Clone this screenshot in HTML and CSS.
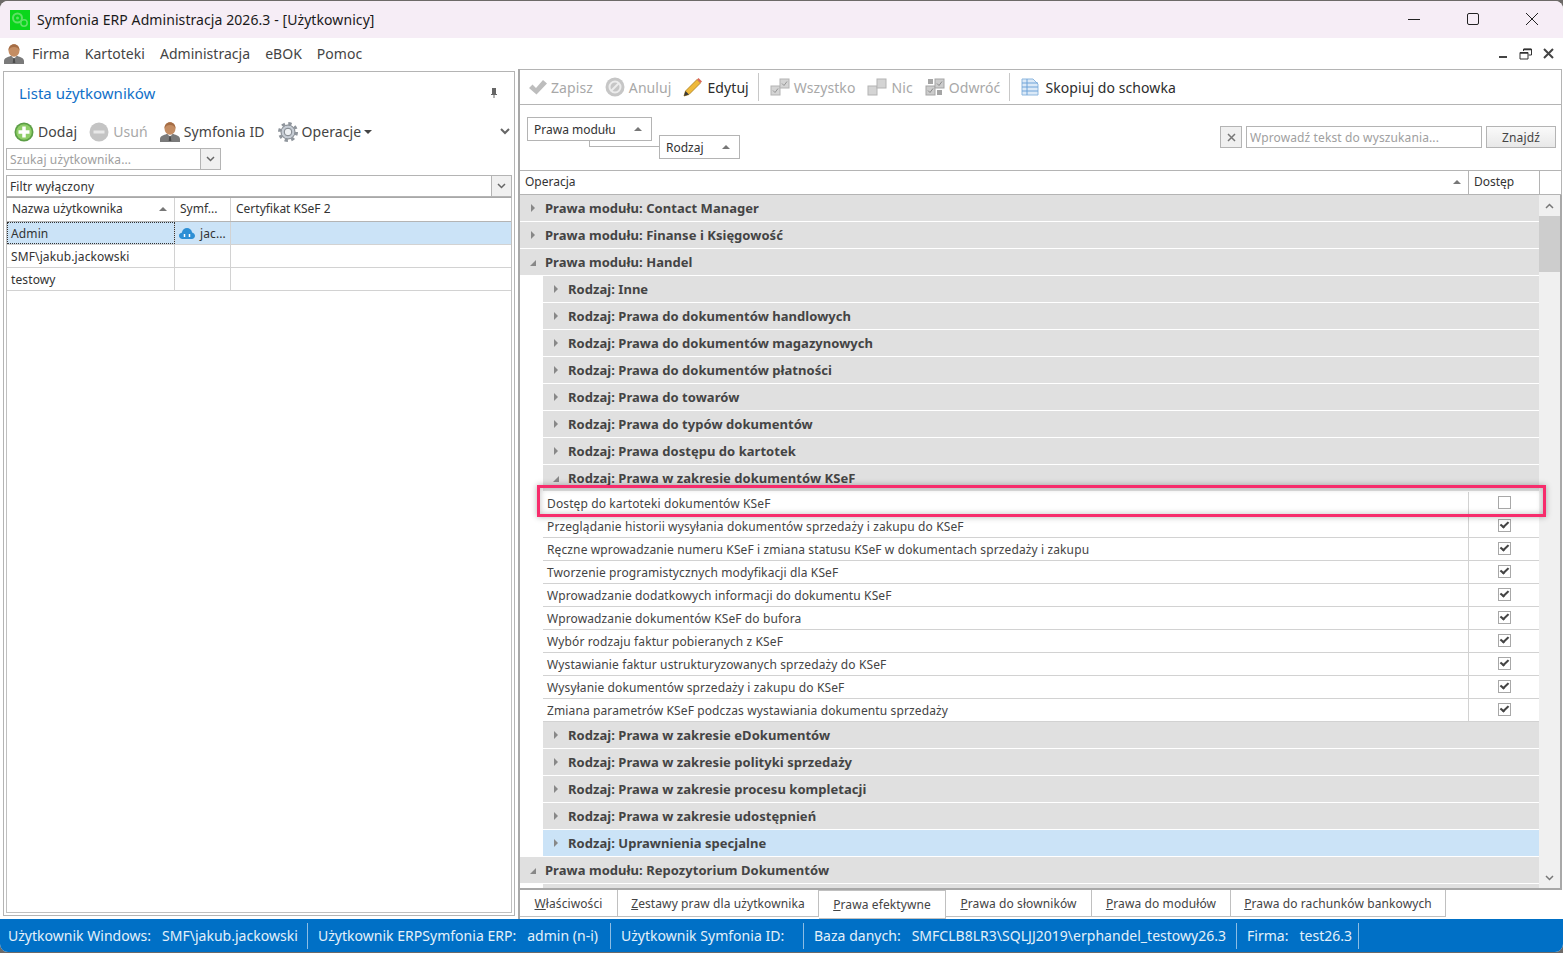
FILE: index.html
```html
<!DOCTYPE html>
<html lang="pl">
<head>
  <meta charset="UTF-8" />
  <title>Symfonia ERP Administracja 2026.3 - [Użytkownicy]</title>
  <link rel="stylesheet" href="styles.css">
</head>
<body>
  <svg class="icon-defs" width="0" height="0">
    <defs>
      <symbol id="i-user" viewBox="0 0 20 20">
        <path d="M0 20v-3c0-3 4-4 6.500-5h7c2.500 1 6.500 2 6.500 5v3z" fill="#7a7a7a"/>
        <path d="M7.500 12l2.500 3 2.500-3z" fill="#f0f0f0"/>
        <path d="M9.300 14h1.400l.6 5h-2.600z" fill="#4c4c4c"/>
        <ellipse cx="10" cy="6.500" rx="5.500" ry="6.200" fill="#c48d63"/>
        <path d="M4.500 6.500C4.500 2.500 7 .3 10 .3s5.500 2.200 5.500 6.200c-1-2.500-3-3.500-5.500-3.500S5.500 4 4.500 6.500z" fill="#a56d45"/>
      </symbol>
      <symbol id="i-box" viewBox="0 0 20 20">
        <rect x="1" y="9" width="9" height="9" fill="#d4d4d4" stroke="#b4b4b4"/>
        <rect x="10" y="2" width="9" height="9" fill="#d4d4d4" stroke="#b4b4b4"/>
      </symbol>
      <symbol id="i-box-check" viewBox="0 0 20 20">
        <rect x="1" y="9" width="9" height="9" fill="#d4d4d4" stroke="#b4b4b4"/>
        <rect x="10" y="2" width="9" height="9" fill="#d4d4d4" stroke="#b4b4b4"/>
        <path d="M3 13.500l2 2 3-4M12 6.500l2 2 3-4" fill="none" stroke="#969696"/>
      </symbol>
    </defs>
  </svg>

  <div class="window">
    <header class="titlebar">
      <svg class="app-logo" width="20" height="20" viewBox="0 0 20 20">
        <rect width="20" height="20" fill="#0ad61c"/>
        <circle cx="7.500" cy="8" r="4.500" fill="none" stroke="#5fe065" stroke-width="2"/>
        <circle cx="7.500" cy="8" r="1.500" fill="#5fe065"/>
        <circle cx="14" cy="13" r="3.200" fill="none" stroke="#5fe065" stroke-width="1.500"/>
      </svg>
      <span class="title-text">Symfonia ERP Administracja 2026.3 - [Użytkownicy]</span>
      <div class="window-btns">
        <svg width="14" height="14" viewBox="0 0 14 14"><path d="M1 7.500h12" stroke="#222" fill="none"/></svg>
        <svg width="14" height="14" viewBox="0 0 14 14"><rect x="1.500" y="1.500" width="11" height="11" rx="1.500" stroke="#222" fill="none"/></svg>
        <svg width="14" height="14" viewBox="0 0 14 14"><path d="M1 1l12 12M13 1L1 13" stroke="#222" fill="none"/></svg>
      </div>
    </header>

    <nav class="menubar">
      <svg class="menu-user" width="20" height="20"><use href="#i-user"/></svg>
      <span>Firma</span>
      <span>Kartoteki</span>
      <span>Administracja</span>
      <span>eBOK</span>
      <span>Pomoc</span>
      <div class="mdi-btns">
        <svg width="10" height="10" viewBox="0 0 10 10"><path d="M1 8h8" stroke="#444" stroke-width="2"/></svg>
        <svg width="13" height="12" viewBox="0 0 13 12"><path d="M4.500 3V1h8v6h-3M1 4.500h8V11H1z" stroke="#333" fill="none"/><path d="M1 5h8M5 1.500h7" stroke="#333" stroke-width="1.500"/></svg>
        <svg width="11" height="11" viewBox="0 0 11 11"><path d="M1 1l9 9M10 1l-9 9" stroke="#444" stroke-width="2"/></svg>
      </div>
    </nav>

    <div class="workspace">
      <aside class="left-panel">
        <div class="panel-head">
          <h2 class="panel-title">Lista użytkowników</h2>
          <svg class="pin" width="8" height="10" viewBox="0 0 8 10"><path d="M2 0h4v6h1v1H4.500v3h-1V7H1V6h1z" fill="#666"/></svg>
        </div>
        <div class="left-tools">
          <span class="tool">
            <svg width="20" height="20" viewBox="0 0 20 20"><circle cx="10" cy="10" r="9.500" fill="#5c9e46"/><circle cx="10" cy="10" r="7.800" fill="#8fce68"/><path d="M10 4.500v11M4.500 10h11" stroke="#fff" stroke-width="3.500"/></svg>
            Dodaj
          </span>
          <span class="tool off">
            <svg width="20" height="20" viewBox="0 0 20 20"><circle cx="10" cy="10" r="9.500" fill="#c4c4c4"/><path d="M4.500 10h11" stroke="#e8e8e8" stroke-width="3"/></svg>
            Usuń
          </span>
          <span class="tool">
            <svg width="20" height="20"><use href="#i-user"/></svg>
            Symfonia ID
          </span>
          <span class="tool tool-gear">
            <svg width="20" height="20" viewBox="0 0 20 20"><circle cx="10" cy="10" r="7" fill="#c6ccd4" stroke="#7d838a"/><circle cx="10" cy="10" r="8.500" fill="none" stroke="#8f959c" stroke-width="3" stroke-dasharray="3.340 3.340"/><circle cx="10" cy="10" r="3.800" fill="#eef1f4" stroke="#7d838a"/></svg>
            Operacje<i class="caret-down"></i>
          </span>
          <svg class="more" width="10" height="7" viewBox="0 0 10 7"><path d="M1 1l4 4 4-4" stroke="#666" stroke-width="2" fill="none"/></svg>
        </div>
        <div class="combo search-combo">
          <span class="combo-text hint">Szukaj użytkownika...</span>
          <span class="combo-btn"><svg width="9" height="6" viewBox="0 0 9 6"><path d="M1 1l3.500 3.500L8 1" stroke="#666" stroke-width="1.500" fill="none"/></svg></span>
        </div>
        <div class="combo filter-combo">
          <span class="combo-text">Filtr wyłączony</span>
          <span class="combo-btn"><svg width="9" height="6" viewBox="0 0 9 6"><path d="M1 1l3.500 3.500L8 1" stroke="#666" stroke-width="1.500" fill="none"/></svg></span>
        </div>
        <div class="user-grid">
          <div class="user-row user-head">
            <div class="c-name">Nazwa użytkownika<i class="sort-up"></i></div>
            <div class="c-id">Symf...</div>
            <div class="c-cert">Certyfikat KSeF 2</div>
          </div>
          <div class="user-row selected">
            <div class="c-name focused">Admin</div>
            <div class="c-id">
              <svg width="16" height="11" viewBox="0 0 16 11"><path d="M3.500 11C1.500 11 0 9.500 0 7.800S1.300 5 2.800 4.800C3.300 2 5.500 0 8 0s4.600 1.800 5.100 4.400C14.800 4.700 16 6 16 7.800 16 9.600 14.600 11 12.800 11z" fill="#2d8fd5"/><path d="M5.500 6v3M10.500 6v3" stroke="#fff" stroke-width="1.500"/></svg>
              jac...
            </div>
            <div class="c-cert"></div>
          </div>
          <div class="user-row">
            <div class="c-name">SMF\jakub.jackowski</div>
            <div class="c-id"></div>
            <div class="c-cert"></div>
          </div>
          <div class="user-row">
            <div class="c-name">testowy</div>
            <div class="c-id"></div>
            <div class="c-cert"></div>
          </div>
        </div>
      </aside>

      <section class="right-panel">
        <div class="toolbar">
          <span class="tool off">
            <svg width="18" height="16" viewBox="0 0 18 16"><path d="M0 9l3.500-3.500L7 9l7-8 4 3.500L7.500 15.500z" fill="#bdbdbd"/></svg>
            Zapisz
          </span>
          <span class="tool off">
            <svg width="20" height="20" viewBox="0 0 20 20"><circle cx="10" cy="10" r="9.500" fill="#c6c6c6"/><circle cx="10" cy="10" r="5.500" fill="none" stroke="#ececec" stroke-width="2"/><path d="M6 14l8-8" stroke="#ececec" stroke-width="2"/></svg>
            Anuluj
          </span>
          <span class="tool tool-dark">
            <svg width="20" height="20" viewBox="0 0 20 20"><path d="M1 19l1.500-5L14 2.500l3.500 3.500L6 17.500z" fill="#efb93a" stroke="#a87c1c" stroke-width=".8"/><path d="M14 2.500l1.500-1.500 3.500 3.500L17.500 6z" fill="#d9695a"/><path d="M1 19l1.500-5 3.500 3.500z" fill="#3a3a3a"/></svg>
            Edytuj
          </span>
          <i class="tool-sep"></i>
          <span class="tool off">
            <svg width="20" height="20"><use href="#i-box-check"/></svg>
            Wszystko
          </span>
          <span class="tool off">
            <svg width="20" height="20"><use href="#i-box"/></svg>
            Nic
          </span>
          <span class="tool off">
            <svg width="20" height="20" viewBox="0 0 20 20"><rect x="1" y="9" width="9" height="9" fill="#ccc" stroke="#a5a5a5"/><rect x="10" y="2" width="9" height="9" fill="#ccc" stroke="#a5a5a5"/><path d="M3 2h5v5H3zM12 13h5v5h-5z" fill="#a5a5a5"/><path d="M3 13.500l2 2 3-4M12 6.500l2 2 3-4" fill="none" stroke="#8a8a8a"/></svg>
            Odwróć
          </span>
          <i class="tool-sep"></i>
          <span class="tool tool-dark">
            <svg width="20" height="18" viewBox="0 0 20 18"><path d="M1 1h11l5 5v11H1z" fill="#dbe9f7" stroke="#8db7df"/><path d="M1 5h16M1 9h16M1 13h16M6 1v16" stroke="#6fa3d8"/></svg>
            Skopiuj do schowka
          </span>
        </div>

        <div class="group-bar">
          <div class="group-chips">
            <span class="chip chip-1">Prawa modułu<i class="sort-up"></i></span>
            <i class="chip-link"></i>
            <span class="chip chip-2">Rodzaj<i class="sort-up"></i></span>
          </div>
          <div class="find">
            <span class="find-clear"><svg width="9" height="9" viewBox="0 0 9 9"><path d="M1 1l7 7M8 1L1 8" stroke="#777" stroke-width="1.500"/></svg></span>
            <span class="find-input">Wprowadź tekst do wyszukania...</span>
            <span class="find-btn">Znajdź</span>
          </div>
        </div>

        <div class="grid-head">
          <div class="gh-op">Operacja<i class="sort-up"></i></div>
          <div class="gh-access">Dostęp</div>
          <div class="gh-rest"></div>
        </div>

        <div class="grid-body">
          <div class="rows">
            <div class="group"><i class="arrow-r"></i>Prawa modułu: Contact Manager</div>
            <div class="group"><i class="arrow-r"></i>Prawa modułu: Finanse i Księgowość</div>
            <div class="group"><i class="arrow-d"></i>Prawa modułu: Handel</div>
            <div class="nested">
              <div class="group sub"><i class="arrow-r"></i>Rodzaj: Inne</div>
              <div class="group sub"><i class="arrow-r"></i>Rodzaj: Prawa do dokumentów handlowych</div>
              <div class="group sub"><i class="arrow-r"></i>Rodzaj: Prawa do dokumentów magazynowych</div>
              <div class="group sub"><i class="arrow-r"></i>Rodzaj: Prawa do dokumentów płatności</div>
              <div class="group sub"><i class="arrow-r"></i>Rodzaj: Prawa do towarów</div>
              <div class="group sub"><i class="arrow-r"></i>Rodzaj: Prawa do typów dokumentów</div>
              <div class="group sub"><i class="arrow-r"></i>Rodzaj: Prawa dostępu do kartotek</div>
              <div class="group sub"><i class="arrow-d"></i>Rodzaj: Prawa w zakresie dokumentów KSeF</div>
              <div class="leaf"><span>Dostęp do kartoteki dokumentów KSeF</span><div class="cell-check"><i class="check"></i></div></div>
              <div class="leaf"><span>Przeglądanie historii wysyłania dokumentów sprzedaży i zakupu do KSeF</span><div class="cell-check"><i class="check on"></i></div></div>
              <div class="leaf"><span>Ręczne wprowadzanie numeru KSeF i zmiana statusu KSeF w dokumentach sprzedaży i zakupu</span><div class="cell-check"><i class="check on"></i></div></div>
              <div class="leaf"><span>Tworzenie programistycznych modyfikacji dla KSeF</span><div class="cell-check"><i class="check on"></i></div></div>
              <div class="leaf"><span>Wprowadzanie dodatkowych informacji do dokumentu KSeF</span><div class="cell-check"><i class="check on"></i></div></div>
              <div class="leaf"><span>Wprowadzanie dokumentów KSeF do bufora</span><div class="cell-check"><i class="check on"></i></div></div>
              <div class="leaf"><span>Wybór rodzaju faktur pobieranych z KSeF</span><div class="cell-check"><i class="check on"></i></div></div>
              <div class="leaf"><span>Wystawianie faktur ustrukturyzowanych sprzedaży do KSeF</span><div class="cell-check"><i class="check on"></i></div></div>
              <div class="leaf"><span>Wysyłanie dokumentów sprzedaży i zakupu do KSeF</span><div class="cell-check"><i class="check on"></i></div></div>
              <div class="leaf"><span>Zmiana parametrów KSeF podczas wystawiania dokumentu sprzedaży</span><div class="cell-check"><i class="check on"></i></div></div>
              <div class="group sub"><i class="arrow-r"></i>Rodzaj: Prawa w zakresie eDokumentów</div>
              <div class="group sub"><i class="arrow-r"></i>Rodzaj: Prawa w zakresie polityki sprzedaży</div>
              <div class="group sub"><i class="arrow-r"></i>Rodzaj: Prawa w zakresie procesu kompletacji</div>
              <div class="group sub"><i class="arrow-r"></i>Rodzaj: Prawa w zakresie udostępnień</div>
              <div class="group sub active"><i class="arrow-r"></i>Rodzaj: Uprawnienia specjalne</div>
            </div>
            <div class="group"><i class="arrow-d"></i>Prawa modułu: Repozytorium Dokumentów</div>
            <div class="nested"><div class="group sub"></div></div>
          </div>
          <div class="scrollbar">
            <span class="sb-btn"><svg width="9" height="6" viewBox="0 0 9 6"><path d="M1 5l3.500-3.500L8 5" stroke="#777" stroke-width="1.500" fill="none"/></svg></span>
            <span class="sb-thumb"></span>
            <span class="sb-btn sb-end"><svg width="9" height="6" viewBox="0 0 9 6"><path d="M1 1l3.500 3.500L8 1" stroke="#777" stroke-width="1.500" fill="none"/></svg></span>
          </div>
          <div class="highlight"></div>
        </div>

        <div class="tabs">
          <span class="tab t1"><u>W</u>łaściwości</span>
          <span class="tab t2"><u>Z</u>estawy praw dla użytkownika</span>
          <span class="tab t3 current"><u>P</u>rawa efektywne</span>
          <span class="tab t4"><u>P</u>rawa do słowników</span>
          <span class="tab t5"><u>P</u>rawa do modułów</span>
          <span class="tab t6"><u>P</u>rawa do rachunków bankowych</span>
        </div>
      </section>
    </div>

    <footer class="statusbar">
      <span class="st st1">Użytkownik Windows:&nbsp;&nbsp; SMF\jakub.jackowski</span>
      <span class="st st2">Użytkownik ERPSymfonia ERP:&nbsp;&nbsp; admin (n-i)</span>
      <span class="st st3">Użytkownik Symfonia ID:</span>
      <span class="st st4">Baza danych:&nbsp;&nbsp; SMFCLB8LR3\SQLJJ2019\erphandel_testowy26.3</span>
      <span class="st st5">Firma:&nbsp;&nbsp; test26.3</span>
    </footer>
  </div>
</body>
</html>
```

FILE: styles.css
```css
/* Global */
html, body {
  margin: 0;
  padding: 0;
  height: 100%;
  background: #6d6a68;
  font-family: "Noto Sans", "Open Sans", sans-serif;
  color: #333;
  overflow: hidden;
}
.icon-defs {
  position: absolute;
}
svg {
  flex-shrink: 0;
  display: block;
}
.window {
  height: 951px;
  margin-top: 1px;
  display: flex;
  flex-direction: column;
  background: #fff;
  border-radius: 8px;
  overflow: hidden;
}

/* Title bar */
.titlebar {
  height: 37px;
  flex-shrink: 0;
  display: flex;
  align-items: center;
  padding-left: 10px;
  background: #f6edf6;
}
.title-text {
  margin-left: 7px;
  font-size: 14px;
  letter-spacing: .08px;
  color: #1a1a1a;
}
.window-btns {
  margin-left: auto;
  margin-top: -1px;
  display: flex;
  gap: 45px;
  padding-right: 24px;
}

/* Menu */
.menubar {
  height: 31px;
  flex-shrink: 0;
  display: flex;
  align-items: center;
  gap: 15px;
  padding-left: 4px;
  font-size: 14px;
  letter-spacing: .03px;
  color: #444;
}
.menu-user {
  margin-right: -7px;
}
.mdi-btns {
  margin-left: auto;
  display: flex;
  align-items: center;
  gap: 11px;
  padding-right: 9px;
}

/* Main split */
.workspace {
  flex: 1;
  min-height: 0;
  display: flex;
  padding-left: 3px;
  padding-right: 1px;
}
.left-panel {
  width: 512px;
  height: 845px;
  margin-top: 2px;
  box-sizing: border-box;
  border: 1px solid #b4b4b4;
  display: flex;
  flex-direction: column;
  padding: 0 2px;
  flex-shrink: 0;
  font-size: 12px;
  letter-spacing: .12px;
}
.panel-head {
  height: 41px;
  padding: 0 14px 0 13px;
  margin-bottom: 2px;
  flex-shrink: 0;
  display: flex;
  align-items: center;
  justify-content: space-between;
}
.panel-title {
  margin: 0;
  font-size: 15px;
  font-weight: normal;
  letter-spacing: 0;
  color: #1170c8;
}
.left-tools {
  height: 33px;
  flex-shrink: 0;
  display: flex;
  align-items: center;
  gap: 12px;
  padding-left: 8px;
}
.more {
  margin-left: auto;
  margin-right: 2px;
}
.tool {
  display: flex;
  align-items: center;
  gap: 4px;
  font-size: 14px;
  letter-spacing: .08px;
  color: #444;
}
.tool.off {
  color: #a8a8a8;
}
.tool-dark {
  color: #2c2c2c;
}
.tool-gear {
  margin-left: 1px;
}
.caret-down {
  width: 0;
  height: 0;
  margin-left: -1px;
  border: 4px solid transparent;
  border-top-color: #444;
  border-bottom: 0;
}
.combo {
  display: flex;
  box-sizing: border-box;
  border: 1px solid #b4b4b4;
  flex-shrink: 0;
}
.search-combo {
  width: 215px;
  height: 22px;
}
.filter-combo {
  height: 22px;
  margin-top: 5px;
}
.combo-text {
  flex: 1;
  padding: 1px 0 0 3px;
  line-height: 20px;
}
.hint {
  color: #a0a0a0;
}
.combo-btn {
  width: 19px;
  display: flex;
  align-items: center;
  justify-content: center;
  border-left: 1px solid #b4b4b4;
  background: #f0f0f0;
}
.user-grid {
  height: 716px;
  box-sizing: border-box;
  border: 1px solid #c0c0c0;
  border-top: 1px solid #a8a8a8;
}
.user-row {
  display: grid;
  grid-template-columns: 168px 56px 1fr;
  height: 23px;
  box-sizing: border-box;
  border-bottom: 1px solid #d2d2d2;
  color: #333;
}
.user-row > div {
  border-right: 1px solid #d2d2d2;
  padding: 1px 0 0 4px;
  line-height: 22px;
  display: flex;
  align-items: center;
  gap: 5px;
  overflow: hidden;
  white-space: nowrap;
}
.user-row > div:last-child {
  border-right: 0;
}
.user-head {
  height: 24px;
  border-bottom-color: #b4b4b4;
  letter-spacing: 0;
}
.user-row.user-head > div {
  padding: 0 0 1px 5px;
}
.user-head .sort-up {
  margin-left: auto;
  margin-right: 7px;
}
.selected {
  background: #cbe3f7;
}
.focused {
  outline: 1px dotted #333;
  outline-offset: -1px;
}
.sort-up {
  width: 0;
  height: 0;
  border: 4px solid transparent;
  border-bottom: 4px solid #777;
  border-top: 0;
  flex-shrink: 0;
}

/* Right side */
.right-panel {
  width: 1044px;
  margin-left: 3px;
  box-sizing: border-box;
  display: flex;
  flex-direction: column;
  border-left: 2px solid #a8a8a8;
  flex-shrink: 0;
  min-height: 0;
}
.toolbar {
  height: 36px;
  flex-shrink: 0;
  box-sizing: border-box;
  border-top: 1px solid #b4b4b4;
  border-bottom: 1px solid #b4b4b4;
  border-right: 1px solid #b4b4b4;
  display: flex;
  align-items: center;
  gap: 12px;
  padding-left: 9px;
}
.tool-sep {
  width: 1px;
  height: 28px;
  margin: 0 -1px 0 -3px;
  background: #c8c8c8;
}
.group-bar {
  height: 65px;
  flex-shrink: 0;
  display: flex;
  justify-content: space-between;
  box-sizing: border-box;
  border-right: 1px solid #b4b4b4;
  padding: 12px 5px 0 7px;
}
.group-chips {
  position: relative;
  width: 220px;
}
.chip {
  position: absolute;
  box-sizing: border-box;
  border: 1px solid #b4b4b4;
  height: 24px;
  display: flex;
  align-items: center;
  justify-content: space-between;
  padding: 0 9px 0 6px;
  font-size: 12px;
  background: #fff;
}
.chip-1 {
  left: 0;
  top: 0;
  width: 125px;
}
.chip-2 {
  left: 132px;
  top: 18px;
  width: 81px;
}
.chip-link {
  position: absolute;
  left: 62px;
  top: 24px;
  width: 70px;
  height: 5px;
  border-left: 1px solid #b4b4b4;
  border-bottom: 1px solid #b4b4b4;
}
.find {
  display: flex;
  gap: 4px;
  height: 22px;
  margin-top: 9px;
  font-size: 12px;
  letter-spacing: .12px;
}
.find-clear {
  width: 22px;
  box-sizing: border-box;
  border: 1px solid #b4b4b4;
  background: #f0f0f0;
  display: flex;
  align-items: center;
  justify-content: center;
}
.find-input {
  width: 236px;
  box-sizing: border-box;
  border: 1px solid #b4b4b4;
  color: #a0a0a0;
  padding: 1px 0 0 3px;
  line-height: 20px;
}
.find-btn {
  width: 70px;
  box-sizing: border-box;
  border: 1px solid #b4b4b4;
  background: linear-gradient(#fafafa, #e8e8e8);
  text-align: center;
  padding-top: 1px;
  line-height: 20px;
  color: #444;
}
.grid-head {
  height: 25px;
  flex-shrink: 0;
  box-sizing: border-box;
  display: flex;
  border-top: 1px solid #b4b4b4;
  border-bottom: 1px solid #b4b4b4;
  border-right: 1px solid #b4b4b4;
  font-size: 12px;
  line-height: 21px;
}
.gh-op {
  flex: 1;
  display: flex;
  align-items: center;
  justify-content: space-between;
  padding: 0 7px 2px 5px;
}
.gh-access {
  width: 71px;
  box-sizing: border-box;
  padding-left: 5px;
  border-left: 1px solid #b4b4b4;
}
.gh-rest {
  width: 22px;
  box-sizing: border-box;
  border-left: 1px solid #b4b4b4;
}
.grid-body {
  position: relative;
  height: 695px;
  flex-shrink: 0;
  display: flex;
  box-sizing: border-box;
  border-bottom: 2px solid #a8a8a8;
  border-right: 2px solid #a8a8a8;
}
.rows {
  flex: 1;
  overflow: hidden;
}
.nested {
  padding-left: 23px;
}
.group {
  height: 26px;
  margin-bottom: 1px;
  background: #e0e0e0;
  display: flex;
  align-items: center;
  padding-left: 25px;
  position: relative;
  font-size: 13px;
  font-weight: 700;
  letter-spacing: .04px;
  color: #444;
}
.group.active {
  background: #cbe3f7;
}
.arrow-r, .arrow-d {
  position: absolute;
  left: 11px;
  top: 9px;
  width: 0;
  height: 0;
}
.arrow-r {
  border: 4px solid transparent;
  border-left: 4px solid #888;
  border-right: 0;
}
.arrow-d {
  left: 10px;
  top: 11px;
  border-style: solid;
  border-width: 0 0 6px 6px;
  border-color: transparent transparent #888 transparent;
}
.leaf {
  height: 23px;
  box-sizing: border-box;
  border-bottom: 1px solid #d2d2d2;
  display: flex;
  align-items: center;
  justify-content: space-between;
  padding-left: 4px;
  font-size: 12px;
  letter-spacing: .12px;
  color: #444;
}
.cell-check {
  width: 71px;
  height: 100%;
  box-sizing: border-box;
  border-left: 1px solid #d2d2d2;
  display: flex;
  align-items: center;
  justify-content: center;
}
.check {
  width: 13px;
  height: 13px;
  margin-top: -1px;
  box-sizing: border-box;
  border: 1px solid #a8a8a8;
  display: block;
  position: relative;
}
.check.on::after {
  content: "";
  position: absolute;
  left: 3px;
  top: 0;
  width: 5px;
  height: 8px;
  transform: rotate(40deg) skewX(-6deg);
  border-right: 2px solid #444;
  border-bottom: 2px solid #444;
  box-sizing: border-box;
}
.scrollbar {
  width: 21px;
  flex-shrink: 0;
  background: #f0f0f0;
  display: flex;
  flex-direction: column;
}
.sb-btn {
  height: 21px;
  flex-shrink: 0;
  display: flex;
  align-items: center;
  justify-content: center;
}
.sb-thumb {
  height: 56px;
  background: #cdcdcd;
}
.sb-end {
  margin-top: auto;
}
.highlight {
  position: absolute;
  left: 17px;
  top: 290px;
  width: 1009px;
  height: 32px;
  box-sizing: border-box;
  border: 3px solid #f72c6c;
  box-shadow: 0 0 6px rgba(0, 0, 0, .3), inset 0 0 6px rgba(0, 0, 0, .25);
  pointer-events: none;
}

/* Tabs */
.tabs {
  display: flex;
  height: 29px;
  flex-shrink: 0;
  font-size: 12px;
  letter-spacing: .1px;
  color: #444;
}
.tab {
  box-sizing: border-box;
  border: 1px solid #c0c0c0;
  border-top: 0;
  border-left: 0;
  height: 27px;
  line-height: 27px;
  text-align: center;
}
.t1 { width: 98px; }
.t2 { width: 201px; }
.t3 { width: 127px; }
.t4 { width: 146px; }
.t5 { width: 139px; }
.t6 { width: 215px; }
.tab.current {
  height: 29px;
  line-height: 27px;
  background: #fff;
  border-top: 1px solid #c0c0c0;
}

/* Status bar */
.statusbar {
  height: 33px;
  flex-shrink: 0;
  background: #0070c6;
  display: flex;
  align-items: center;
  font-size: 14px;
  letter-spacing: .02px;
  color: #e4f0fa;
}
.st {
  box-sizing: border-box;
  height: 26px;
  line-height: 26px;
  padding-left: 10px;
  border-right: 1px solid #8cbde4;
  white-space: nowrap;
}
.st1 { width: 308px; padding-left: 8px; }
.st2 { width: 303px; }
.st3 { width: 193px; }
.st4 { width: 433px; }
.st5 { width: 122px; }
```
